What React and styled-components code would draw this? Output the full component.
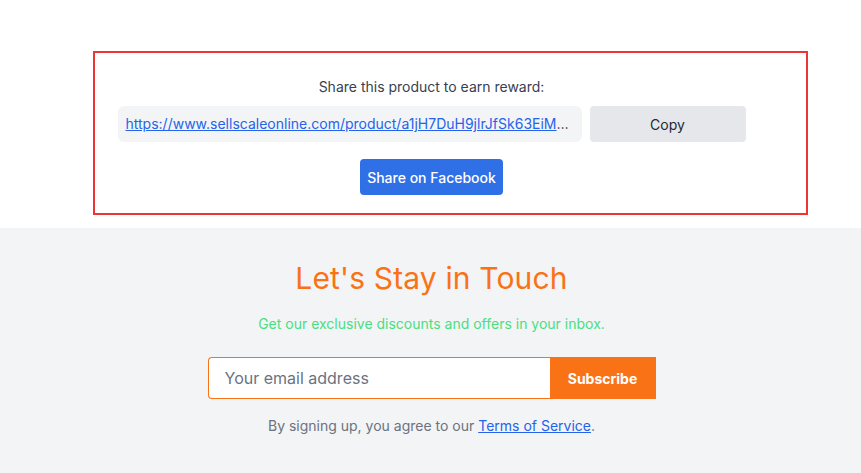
import React from "react";
import styled, { createGlobalStyle } from "styled-components";

const Global = createGlobalStyle`
  html, body { margin: 0; padding: 0; background: #ffffff; }
  body { font-family: Inter, "Noto Sans", Arial, sans-serif; }
  * { box-sizing: border-box; }
`;

const Page = styled.div`
  width: 861px;
  min-height: 473px;
  display: flex;
  flex-direction: column;
`;

const Top = styled.div`
  height: 228px;
  padding-top: 51px;
  background: #ffffff;
`;

const ShareBox = styled.div`
  margin-left: 93px;
  width: 715px;
  height: 164px;
  border: 2px solid #ef3434;
  padding: 24px 60px 0 22px;
  display: flex;
  flex-direction: column;
  align-items: center;
`;

const ShareLabel = styled.p`
  margin: 0;
  font-size: 14px;
  line-height: 20px;
  color: #374151;
`;

const LinkRow = styled.div`
  margin-top: 9px;
  display: flex;
  gap: 8px;
  width: 628px;
`;

const LinkField = styled.div`
  width: 464px;
  height: 36px;
  background: #f3f4f6;
  border-radius: 6px;
  padding: 0 12px 0 8px;
  font-size: 14px;
  line-height: 36px;
  color: #374151;
  white-space: nowrap;
  overflow: hidden;
  text-overflow: ellipsis;
`;

const LinkA = styled.a`
  color: #2563eb;
  text-decoration: underline;
`;

const CopyButton = styled.button`
  width: 156px;
  height: 36px;
  border: none;
  border-radius: 4px;
  background: #e5e7eb;
  color: #1f2937;
  font-family: inherit;
  font-size: 14px;
`;

const FbButton = styled.button`
  margin-top: 17px;
  height: 36px;
  padding: 0 7px;
  border: none;
  border-radius: 4px;
  background: #2f70e7;
  color: #ffffff;
  font-family: inherit;
  font-size: 14px;
  font-weight: 500;
`;

const Newsletter = styled.section`
  flex: 1;
  background: #f3f4f6;
  display: flex;
  flex-direction: column;
  align-items: center;
  padding: 32px 0 30px 2px;
`;

const Heading = styled.h2`
  margin: 0;
  font-size: 30px;
  line-height: 36px;
  font-weight: 400;
  letter-spacing: 0.15px;
  color: #f97316;
`;

const Sub = styled.p`
  margin: 18px 0 0;
  font-size: 14px;
  line-height: 20px;
  color: #4ade80;
`;

const Form = styled.form`
  margin-top: 23px;
  display: flex;
  width: 448px;
  height: 42px;
`;

const EmailInput = styled.input`
  flex: 1;
  height: 42px;
  border: 1px solid #f97316;
  border-right: none;
  border-radius: 4px 0 0 4px;
  background: #ffffff;
  padding: 0 16px;
  font-family: inherit;
  font-size: 16px;
  color: #374151;
  outline: none;
  &::placeholder { color: #6b7280; }
`;

const SubscribeButton = styled.button`
  width: 106px;
  height: 42px;
  border: none;
  background: #f97316;
  color: #ffffff;
  font-family: inherit;
  font-size: 14px;
  font-weight: 700;
`;

const Terms = styled.p`
  margin: 17px 0 0;
  font-size: 14px;
  line-height: 20px;
  color: #6b7280;
`;

const TermsLink = styled.a`
  color: #2563eb;
  text-decoration: underline;
`;

export default function App() {
  return (
    <Page>
      <Global />
      <Top>
        <ShareBox>
          <ShareLabel>Share this product to earn reward:</ShareLabel>
          <LinkRow>
            <LinkField>
              <LinkA href="#">https://www.sellscaleonline.com/product/a1jH7DuH9jlrJfSk63EiMqZx8pLw2vNt</LinkA>
            </LinkField>
            <CopyButton type="button">Copy</CopyButton>
          </LinkRow>
          <FbButton type="button">Share on Facebook</FbButton>
        </ShareBox>
      </Top>
      <Newsletter>
        <Heading>Let's Stay in Touch</Heading>
        <Sub>Get our exclusive discounts and offers in your inbox.</Sub>
        <Form onSubmit={(e) => e.preventDefault()}>
          <EmailInput type="email" placeholder="Your email address" />
          <SubscribeButton type="submit">Subscribe</SubscribeButton>
        </Form>
        <Terms>
          By signing up, you agree to our <TermsLink href="#">Terms of Service</TermsLink>.
        </Terms>
      </Newsletter>
    </Page>
  );
}
